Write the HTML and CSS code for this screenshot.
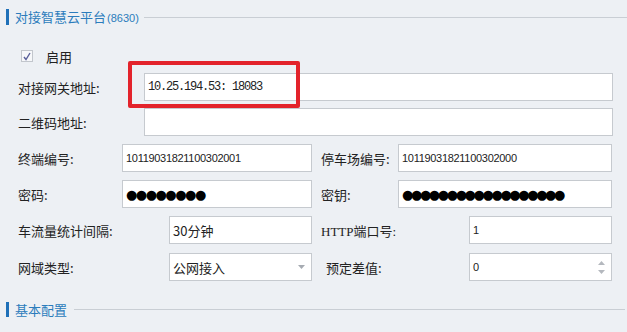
FILE: index.html
```html
<!DOCTYPE html>
<html lang="zh-CN">
<head>
    <meta charset="UTF-8">
    <title>对接智慧云平台</title>
    <link rel="stylesheet" href="styles.css">
</head>
<body>
    <div class="panel">
        <div class="section-head">
            <span class="bar"></span>
            <span class="title">对接智慧云平台<span class="port">(8630)</span></span>
            <span class="rule"></span>
        </div>

        <div class="check-row">
            <span class="checkbox">
                <svg width="8" height="9" viewBox="0 0 8 9"><path d="M1 5 L3 7.5 L7 1" fill="none" stroke="#5a5f9a" stroke-width="1.4"/></svg>
            </span>
            <span class="check-label">启用</span>
        </div>

        <div class="row row-full row-gateway">
            <label class="label">对接网关地址:</label>
            <div class="field mono">10.25.194.53: 18083</div>
            <div class="mark"></div>
        </div>

        <div class="row row-full">
            <label class="label">二维码地址:</label>
            <div class="field"></div>
        </div>

        <div class="row row-b gap8">
            <label class="label l-b">终端编号:</label>
            <div class="field f-b num">10119031821100302001</div>
            <label class="label r-b">停车场编号:</label>
            <div class="field f-b2 num">10119031821100302000</div>
        </div>

        <div class="row row-b gap8">
            <label class="label l-b">密码:</label>
            <div class="field f-b dots">●●●●●●●●</div>
            <label class="label r-b">密钥:</label>
            <div class="field f-b2 dots dots-r">●●●●●●●●●●●●●●●●●●</div>
        </div>

        <div class="row row-c gap8">
            <label class="label l-c">车流量统计间隔:</label>
            <div class="field f-c">30分钟</div>
            <label class="label r-c">HTTP端口号:</label>
            <div class="field f-c2 num">1</div>
        </div>

        <div class="row row-c gap9">
            <label class="label l-c">网域类型:</label>
            <div class="field f-c select">公网接入
                <svg class="caret" width="7" height="4" viewBox="0 0 7 4"><path d="M0 0 H7 L3.5 4 Z" fill="#a6abb2"/></svg>
            </div>
            <label class="label r-c indent">预定差值:</label>
            <div class="field f-c2 num spin">0
                <span class="spinner">
                    <svg width="7" height="4" viewBox="0 0 7 4"><path d="M0 4 H7 L3.5 0 Z" fill="#b4b8be"/></svg>
                    <svg width="7" height="4" viewBox="0 0 7 4"><path d="M0 0 H7 L3.5 4 Z" fill="#b4b8be"/></svg>
                </span>
            </div>
        </div>

        <div class="section-head second">
            <span class="bar"></span>
            <span class="title">基本配置</span>
            <span class="rule"></span>
        </div>
    </div>
</body>
</html>
```

FILE: styles.css
```css
body {
    margin: 0;
    background-color: #edf0f4;
    font-family: "Noto Sans CJK SC", "Liberation Sans", sans-serif;
    font-size: 13px;
    color: #222;
}

.panel {
    width: 627px;
    height: 332px;
    overflow: hidden;
}

/* section headers */
.section-head {
    display: flex;
    align-items: center;
    height: 16px;
    margin-top: 9px;
    padding-left: 6px;
}

.section-head.second {
    margin-top: 21px;
    height: 15px;
}

.bar {
    width: 3px;
    height: 100%;
    background-color: #1f70b8;
}

.title {
    margin-left: 6px;
    color: #2b7cbc;
    font-size: 13px;
    line-height: 16px;
    white-space: nowrap;
}

.port {
    font-family: "Liberation Sans", sans-serif;
    font-size: 11px;
    margin-left: 1px;
}

.rule {
    flex: 1;
    height: 1px;
    margin-left: 5px;
    background-color: #c9ced4;
}

.section-head.second .rule {
    margin-left: 7px;
    margin-right: 2px;
}

/* enable checkbox */
.check-row {
    display: flex;
    align-items: center;
    height: 12px;
    margin-top: 25px;
    padding-left: 21px;
}

.checkbox {
    width: 10px;
    height: 10px;
    border: 1px solid #c2c6cc;
    background-color: #f7f8fa;
    display: flex;
    align-items: center;
    justify-content: center;
}

.check-label {
    margin-left: 13px;
}

/* form rows */
.row {
    display: flex;
    align-items: center;
    height: 28px;
    padding-left: 18px;
    margin-top: 7px;
}

.row-gateway {
    position: relative;
    margin-top: 11px;
}

.row.gap8 {
    margin-top: 8px;
}

.row.gap9 {
    margin-top: 9px;
}

.label {
    white-space: nowrap;
    flex-shrink: 0;
}

.row-full .label {
    width: 126px;
}

.field {
    box-sizing: border-box;
    height: 28px;
    border: 1px solid #c6cacf;
    background-color: #fff;
    display: flex;
    align-items: center;
    padding-left: 3px;
    font-size: 13px;
    white-space: nowrap;
    overflow: hidden;
}

.row-full .field {
    width: 469px;
}

.mono {
    font-family: "Liberation Mono", monospace;
    font-size: 12px;
    letter-spacing: -1.2px;
    padding-left: 3px;
}

.num {
    font-family: "Liberation Sans", sans-serif;
    font-size: 11px;
    letter-spacing: -0.3px;
}

.dots {
    font-family: "DejaVu Sans", sans-serif;
    font-size: 13px;
    letter-spacing: -1.5px;
    color: #000;
}

.dots-r {
    letter-spacing: -2.4px;
}

/* two-column rows */
.l-b { width: 104px; }
.f-b { width: 190px; }
.r-b { width: 77px; margin-left: 9px; }
.f-b2 { width: 214px; }

.l-c { width: 151px; }
.f-c { width: 143px; }
.r-c { width: 148px; margin-left: 9px; }
.r-c.indent { width: 143px; margin-left: 14px; }
.f-c2 { width: 143px; }

.row-c .r-c:not(.indent) {
    font-family: "Liberation Serif", "Noto Sans CJK SC", serif;
}

.select,
.spin {
    justify-content: space-between;
    padding-right: 6px;
}

.caret {
    margin-right: 0;
}

.spinner {
    display: flex;
    flex-direction: column;
    gap: 5px;
    margin-right: 0;
}

/* red annotation box */
.mark {
    position: absolute;
    left: 128px;
    top: -12px;
    width: 172px;
    height: 47px;
    box-sizing: border-box;
    border: 4px solid #e3232b;
    border-radius: 2px;
}
```
